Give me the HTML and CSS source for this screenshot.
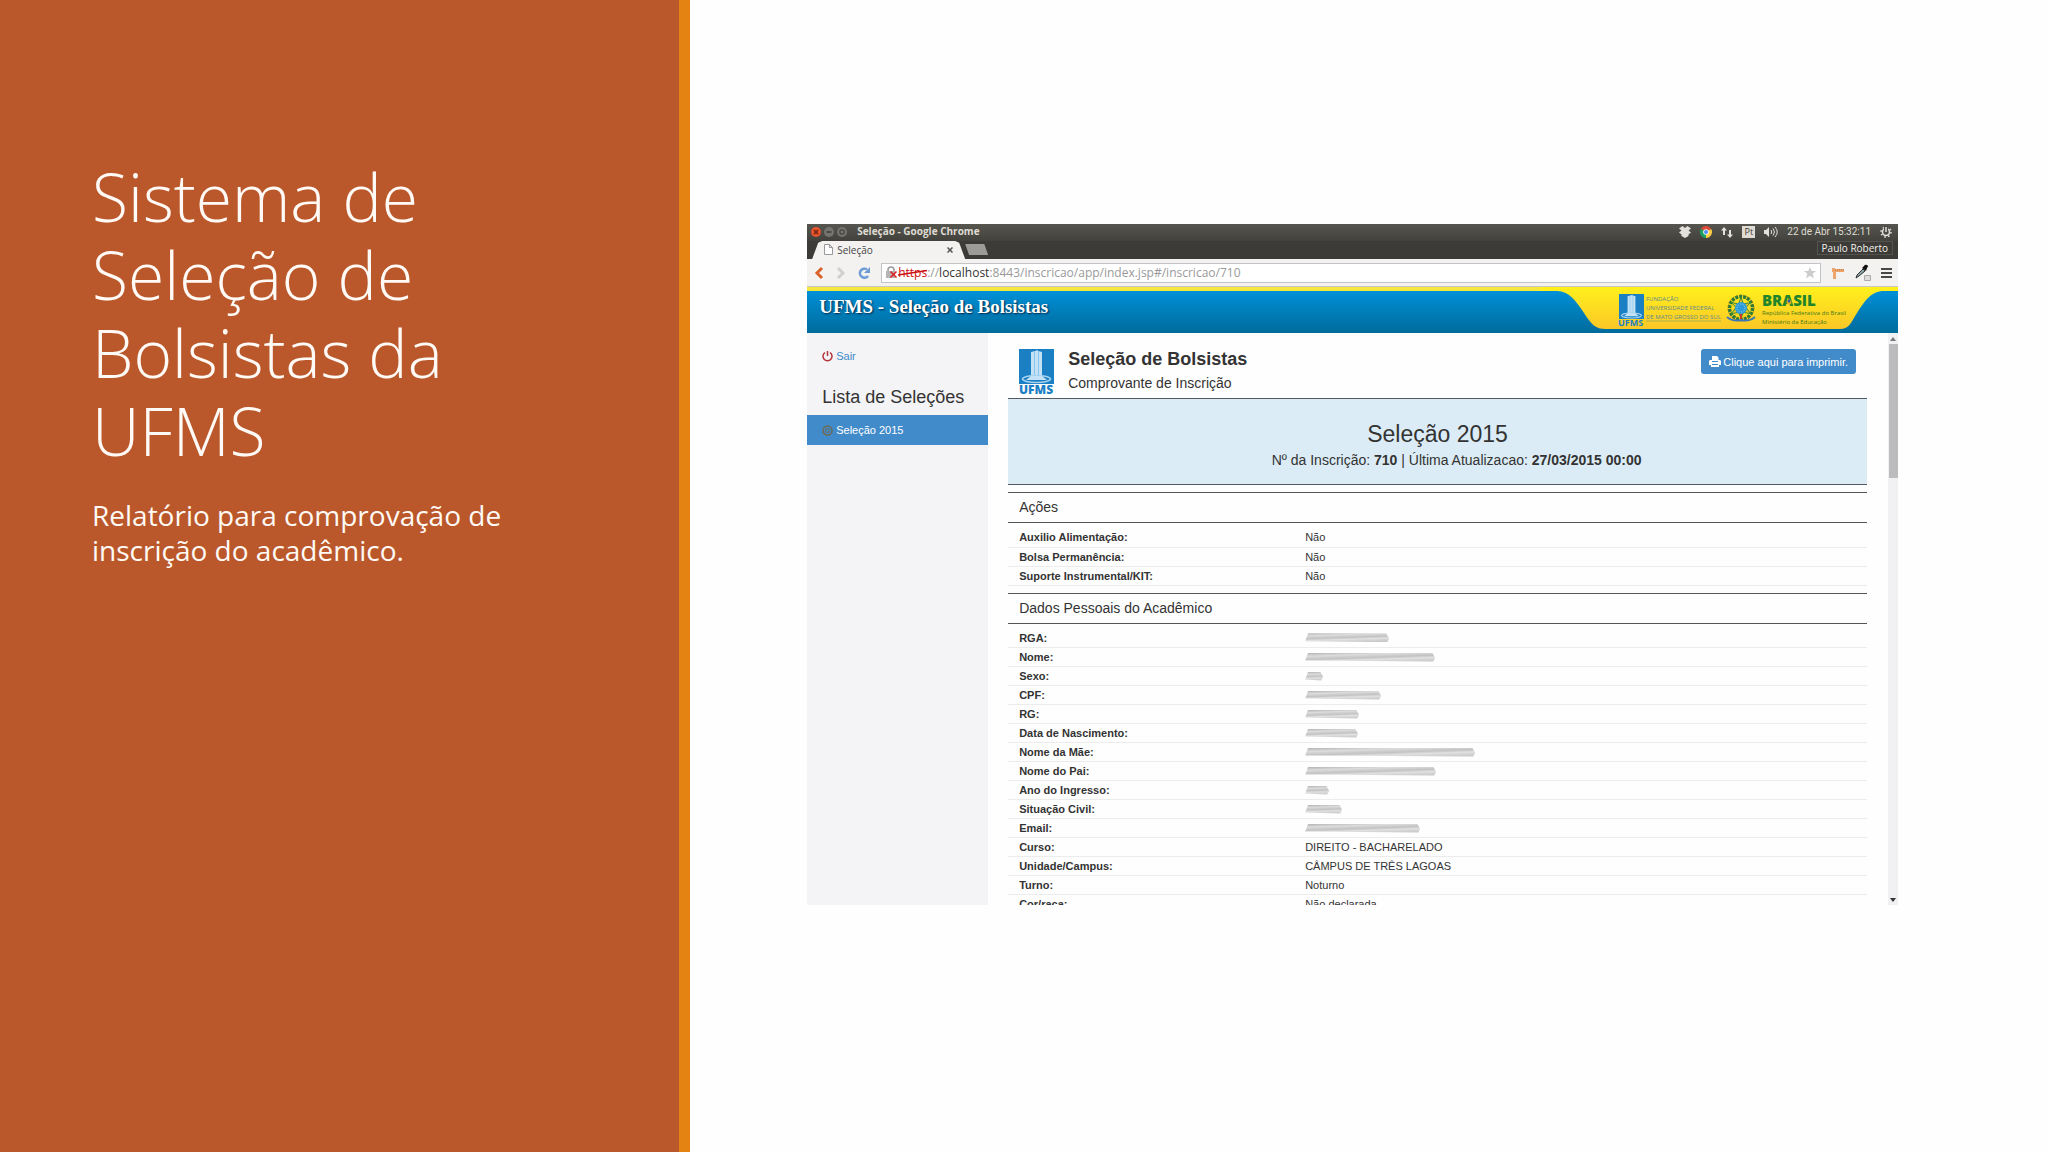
FILE: index.html
```html
<!DOCTYPE html>
<html lang="pt-BR">
<head>
<meta charset="utf-8">
<title>Sistema de Seleção de Bolsistas da UFMS</title>
<link rel="stylesheet" href="styles.css">
</head>
<body>
<svg class="defs" aria-hidden="true">
  <symbol id="ufms-tower" viewBox="0 0 35 35">
    <path fill="#1b7fc4" d="M0 0h35v35H0z"/>
    <path fill="#c4e2f6" d="M12 3l4-1v27h-4zM16 2l3-1v28h-3zM19 2l4 1v25h-4z"/>
    <path fill="#8cc5ea" d="M15 2h1v27h-1zM19 2h1v27h-1z"/>
    <ellipse cx="17.500" cy="30" rx="14" ry="3.500" fill="none" stroke="#a5d3f0" stroke-width="1.500"/>
    <path fill="#c4e2f6" d="M12 27h11l5 4H7z"/>
  </symbol>
</svg>
<main class="slide">
  <section class="intro">
    <h1>Sistema de Seleção de Bolsistas da UFMS</h1>
    <p>Relatório para comprovação de inscrição do acadêmico.</p>
  </section>
  <section class="stage">
    <div class="window">
      <header class="titlebar">
        <div class="controls">
          <svg width="38" height="12" viewBox="0 0 38 12">
            <circle cx="6" cy="6" r="5" fill="#e8532b"/><path d="M4 4l4 4M8 4l-4 4" stroke="#6b2410" stroke-width="1.500"/>
            <circle cx="19" cy="6" r="5" fill="#76746e"/><path d="M16.500 6h5" stroke="#3c3b37" stroke-width="1.500"/>
            <circle cx="32" cy="6" r="5" fill="#76746e"/><path d="M30 4h4v4h-4z" fill="none" stroke="#3c3b37"/>
          </svg>
          <span>Seleção - Google Chrome</span>
        </div>
        <div class="tray">
          <svg width="12" height="12" viewBox="0 0 12 12" fill="#e4e1db"><path d="M3.500 0L6 2l2.500-2L12 2.500 9.500 4.500 12 6.500 9.500 8.500v1.500L6 12 2.500 10V8.500L0 6.500 2.500 4.500 0 2.500z"/></svg>
          <svg width="12" height="12" viewBox="0 0 12 12"><path fill="#dd4b39" d="M6 6L.8 3A6 6 0 0 1 11.200 3z"/><path fill="#ffcd42" d="M6 6l5.200-3A6 6 0 0 1 6 12z"/><path fill="#1aa15f" d="M6 6v6A6 6 0 0 1 .8 3z"/><circle cx="6" cy="6" r="2.800" fill="#fff"/><circle cx="6" cy="6" r="2" fill="#4a8af4"/></svg>
          <svg width="12" height="12" viewBox="0 0 12 12" fill="#e4e1db"><path d="M3 1l3 3.500H4V9H2V4.500H0zM9 12l3-3.500h-2V4H8v4.500H6z"/></svg>
          <span class="lang">Pt</span>
          <svg width="14" height="12" viewBox="0 0 14 12"><path fill="#e4e1db" d="M0 4h2l3-3v10L2 8H0z"/><path fill="none" stroke="#e4e1db" d="M7 4q1.500 2 0 4M9 2.500q3 3.500 0 7M11 1q4.500 5 0 10"/></svg>
          <time>22 de Abr 15:32:11</time>
          <svg width="12" height="12" viewBox="0 0 12 12" fill="none" stroke="#e4e1db"><circle cx="6" cy="6" r="3.500" stroke-width="1.500"/><circle cx="6" cy="6" r="5" stroke-width="1.500" stroke-dasharray="1.600 2.300"/><path d="M6 0v5" stroke="#4a4944" stroke-width="4"/><path d="M6 1v5" stroke-width="1.500"/></svg>
        </div>
      </header>
      <div class="tabs">
        <div class="tab">
          <svg width="9" height="11" viewBox="0 0 9 11"><path fill="#fff" stroke="#999" d="M.5.5h5l3 3v7h-8zM5.500.5v3h3"/></svg>
          <span>Seleção</span>
          <button class="close" aria-label="Fechar aba"><svg width="6" height="6" viewBox="0 0 6 6"><path d="M.5.5l5 5M5.500.5l-5 5" stroke="#555" stroke-width="1.500"/></svg></button>
        </div>
        <button class="newtab" aria-label="Nova aba"></button>
        <button class="user">Paulo Roberto</button>
      </div>
      <div class="toolbar">
        <button aria-label="Voltar"><svg width="12" height="14" viewBox="0 0 12 14"><path d="M9 2L4 7l5 5" fill="none" stroke="#d9632a" stroke-width="3"/></svg></button>
        <button aria-label="Avançar"><svg width="12" height="14" viewBox="0 0 12 14"><path d="M3 2l5 5-5 5" fill="none" stroke="#d2d0cd" stroke-width="3"/></svg></button>
        <button aria-label="Recarregar"><svg width="14" height="14" viewBox="0 0 14 14"><path d="M11 10a4.500 4.500 0 1 1-1-6.500" fill="none" stroke="#6c9bd6" stroke-width="2.600"/><path d="M13 1v6H7z" fill="#6c9bd6"/></svg></button>
        <label class="omnibox">
          <svg width="13" height="13" viewBox="0 0 13 13"><path d="M3 6V4a3 3 0 0 1 6 0v2" fill="none" stroke="#999" stroke-width="1.500"/><path d="M1 5h9v7H1z" fill="#b5b5b5"/><path d="M5.500 5.500l6 6M11.500 5.500l-6 6" stroke="#d22" stroke-width="1.600"/></svg>
          <span class="url"><span class="scheme">https<svg viewBox="0 0 28 8" preserveAspectRatio="none"><path d="M0 6L28 1.500" stroke="#c11" stroke-width="1.600"/></svg></span>://<b>localhost</b></span>
          <input type="text" aria-label="Endereço" value=":8443/inscricao/app/index.jsp#/inscricao/710">
          <svg width="12" height="12" viewBox="0 0 12 12"><path fill="#ccc" d="M6 0l1.700 4H12L8.600 6.800 10 11.500 6 8.800 2 11.500l1.400-4.700L0 4h4.300z"/></svg>
        </label>
        <button aria-label="Régua"><svg width="14" height="14" viewBox="0 0 14 14"><path fill="#eda56c" d="M1 2h3v1h9v3H5v7H2V6H1z"/><path stroke="#b9703a" d="M4 4h9" stroke-dasharray="1 1"/></svg></button>
        <button aria-label="Conta-gotas"><svg width="16" height="18" viewBox="0 0 16 18"><path d="M1 14l1-3 6-6 2 2-6 5z" fill="#8ba7a8" stroke="#333"/><path d="M7 4l4 3 1-3q2-2 0-3t-3 1z" fill="#111"/><path d="M9.500 11.500h6v5h-6z" fill="#ddd" stroke="#aaa"/></svg></button>
        <button aria-label="Menu"><svg width="11" height="12" viewBox="0 0 11 12"><path d="M0 2h11M0 6h11M0 10h11" stroke="#484848" stroke-width="2"/></svg></button>
      </div>
      <div class="banner">
        <h2>UFMS - Seleção de Bolsistas</h2>
        <svg class="brand" width="358" height="46" viewBox="0 0 358 46">
          <defs><linearGradient id="gold" x1="0" y1="0" x2="0" y2="1"><stop offset="0" stop-color="#fff01c"/><stop offset="1" stop-color="#fbc727"/></linearGradient></defs>
          <path fill="url(#gold)" d="M0 0h358v4h-14c-13 0-19 10-27 22-7 11-8 16-17 16H66c-11 0-14-4-22-16C36 14 29 4 17 4H0z"/>
          <use href="#ufms-tower" x="79" y="7" width="25" height="25"/>
          <text x="78" y="39" class="b-ufms">UFMS</text>
          <g class="b-name">
            <text x="106" y="14">FUNDAÇÃO</text>
            <text x="106" y="23">UNIVERSIDADE FEDERAL</text>
            <text x="106" y="32">DE MATO GROSSO DO SUL</text>
          </g>
          <path d="M106 34h75" stroke="#8ba06a" stroke-width=".7"/>
          <g transform="translate(201 21)">
            <circle r="11.500" fill="none" stroke="#2d7a35" stroke-width="3.500" stroke-dasharray="3 1"/>
            <circle r="13" fill="none" stroke="#b5761f" stroke-width="1" stroke-dasharray="1 2.500"/>
            <path fill="#e9c51d" stroke="#3f8a3a" stroke-width="1" d="M0-10.500l2.500 6.500 7-1.500-4.500 5 4.500 6-7-1L0 10l-2.500-5.500-7 1 4.500-6-4.500-5 7 1.500z"/>
            <circle r="6" fill="#2d9bd8"/>
            <circle r="4" fill="none" stroke="#a5d9f2" stroke-dasharray="1 1.500"/>
            <path fill="#c63a2a" d="M-1 6h2v7h-2z"/>
            <path d="M-14 9q6 5 14 3 8 2 14-3" fill="none" stroke="#3c78b5" stroke-width="2"/>
          </g>
          <text x="222" y="19" class="b-brasil">BRASIL</text>
          <circle cx="249" cy="15" r="2.500" fill="#e0b020"/><circle cx="249" cy="14" r="1.500" fill="#3558a8"/>
          <g class="b-gov">
            <text x="222" y="28">República Federativa do Brasil</text>
            <text x="222" y="37">Ministério da Educação</text>
          </g>
        </svg>
      </div>
      <div class="page">
        <nav class="side">
          <a class="exit" href="#sair"><svg width="11" height="11" viewBox="0 0 11 11"><path d="M3 1.500a4.500 4.500 0 1 0 5 0M5.500 0v5" fill="none" stroke="#b5343c" stroke-width="1.500"/></svg>Sair</a>
          <h3>Lista de Seleções</h3>
          <a class="item" href="#selecao-2015"><svg width="11" height="11" viewBox="0 0 11 11"><circle cx="5.500" cy="5.500" r="4.500" fill="none" stroke="#6b6a55" stroke-width="1.500"/><circle cx="5.500" cy="5.500" r="2" fill="none" stroke="#6b6a55"/></svg>Seleção 2015</a>
        </nav>
        <div class="content">
          <div class="head">
            <svg class="logo" width="35" height="46" viewBox="0 0 35 46"><use href="#ufms-tower" width="35" height="35"/><text x="0" y="45" class="l-ufms">UFMS</text></svg>
            <div><h3>Seleção de Bolsistas</h3><p>Comprovante de Inscrição</p></div>
            <button class="print"><svg width="12" height="11" viewBox="0 0 12 11"><path fill="#fff" d="M3 0h5l1.500 1.500V4H11l1 1v4h-2v2H2V9H0V5l1-1h2z"/><path stroke="#428bca" d="M3 5.500h6M3 8.500h6"/></svg>Clique aqui para imprimir.</button>
          </div>
          <div class="band"><h4>Seleção 2015</h4><p>Nº da Inscrição: <b>710</b> | Última Atualizacao: <b>27/03/2015 00:00</b></p></div>
          <h5>Ações</h5>
          <table>
            <tr><th scope="row">Auxilio Alimentação:</th><td>Não</td></tr>
            <tr><th scope="row">Bolsa Permanência:</th><td>Não</td></tr>
            <tr><th scope="row">Suporte Instrumental/KIT:</th><td>Não</td></tr>
          </table>
          <h5>Dados Pessoais do Acadêmico</h5>
          <table>
            <tr><th scope="row">RGA:</th><td><span class="smudge" style="width:84px"></span></td></tr>
            <tr><th scope="row">Nome:</th><td><span class="smudge" style="width:130px"></span></td></tr>
            <tr><th scope="row">Sexo:</th><td><span class="smudge" style="width:18px"></span></td></tr>
            <tr><th scope="row">CPF:</th><td><span class="smudge" style="width:76px"></span></td></tr>
            <tr><th scope="row">RG:</th><td><span class="smudge" style="width:54px"></span></td></tr>
            <tr><th scope="row">Data de Nascimento:</th><td><span class="smudge" style="width:53px"></span></td></tr>
            <tr><th scope="row">Nome da Mãe:</th><td><span class="smudge" style="width:170px"></span></td></tr>
            <tr><th scope="row">Nome do Pai:</th><td><span class="smudge" style="width:131px"></span></td></tr>
            <tr><th scope="row">Ano do Ingresso:</th><td><span class="smudge" style="width:24px"></span></td></tr>
            <tr><th scope="row">Situação Civil:</th><td><span class="smudge" style="width:37px"></span></td></tr>
            <tr><th scope="row">Email:</th><td><span class="smudge" style="width:115px"></span></td></tr>
            <tr><th scope="row">Curso:</th><td>DIREITO - BACHARELADO</td></tr>
            <tr><th scope="row">Unidade/Campus:</th><td>CÂMPUS DE TRÊS LAGOAS</td></tr>
            <tr><th scope="row">Turno:</th><td>Noturno</td></tr>
            <tr><th scope="row">Cor/raça:</th><td>Não declarada</td></tr>
          </table>
        </div>
        <div class="scroll"><i class="up"></i><i class="thumb"></i><i class="down"></i></div>
      </div>
    </div>
  </section>
</main>
</body>
</html>
```
FILE: styles.css
```css
* { box-sizing: border-box; margin: 0; }
body { background: #fdfefd; font-family: "Liberation Sans", Arial, sans-serif; color: #333; }
button { border: 0; padding: 0; background: none; font: inherit; color: inherit; display: flex; align-items: center; }
a { text-decoration: none; }
svg { display: block; flex: none; }
.defs { width: 0; height: 0; position: absolute; }

.slide { display: flex; min-height: 100vh; }
.intro { flex: none; width: 33.700%; padding: 157px 150px 0 92px; background: #ba582b; border-right: 11px solid #e48312; color: #fffaf5; font-family: "Open Sans", sans-serif; }
.intro h1 { font-size: 66px; line-height: 78px; font-weight: 300; }
.intro p { font-size: 28px; line-height: 35px; margin-top: 29px; }
.stage { flex: 1; min-width: 0; padding: 224px 150px 0 117px; }

.window { display: flex; flex-direction: column; aspect-ratio: 1091 / 681; overflow: hidden; }
.titlebar { flex: none; display: flex; justify-content: space-between; height: 17px; padding: 0 6px 2px 3px; background: linear-gradient(#56564f, #42413c); color: #dfdbd2; font-family: "Open Sans", sans-serif; font-size: 10px; line-height: 15px; }
.controls, .tray { display: flex; align-items: center; gap: 9px; }
.controls { font-weight: 700; }
.tray time { font-family: Roboto, sans-serif; }
.lang { width: 13px; line-height: 12px; background: #dfdbd2; color: #3c3b37; font-size: 9px; text-align: center; }
.tabs { flex: none; display: flex; height: 18px; padding: 0 5px; background: #3c3b37; font-family: "Open Sans", sans-serif; font-size: 10px; line-height: 16px; }
.tab { display: flex; align-items: center; gap: 4px; width: 153px; padding: 0 12px 1px; background: #f3f2f1; color: #444; clip-path: polygon(0 100%, 6px 10%, 10px 0, 143px 0, 147px 10%, 100% 100%); }
.close { margin-left: auto; }
.newtab { width: 23px; height: 11px; margin-top: 3px; background: #9d9b97; clip-path: polygon(0 0, 83% 0, 100% 100%, 17% 100%); }
.user { margin-left: auto; height: 14px; padding: 0 4px; border: 1px solid #55534d; color: #f0eeea; }
.toolbar { flex: none; display: flex; align-items: center; gap: 10px; height: 28px; padding: 0 6px; background: #f3f2f1; border-bottom: 1px solid #c8c8c0; }
.omnibox { flex: 1; display: flex; align-items: center; height: 20px; padding: 0 4px 0 3px; border: 1px solid #c4c4c4; background: #fff; font: 12px/16px "Open Sans", sans-serif; color: #999; }
.scheme { position: relative; color: #c11; }
.scheme svg { position: absolute; left: 0; top: 5px; width: 100%; height: 8px; }
.url b { font-weight: 400; color: #333; }
.omnibox input { flex: 1; min-width: 0; border: 0; padding: 0; outline: 0; font: inherit; color: inherit; background: none; }

.banner { flex: none; display: flex; justify-content: space-between; height: 46px; background: linear-gradient(#f4e63c 0 4px, #0090d8 4px, #006b9b); }
.banner h2 { padding: 8px 0 0 12px; font: 700 19px/24px "Liberation Serif", serif; color: #fff; text-shadow: 1px 1px 2px #024; }
.b-ufms { font: 700 9px "Open Sans", sans-serif; fill: #1b7fc4; }
.b-name { font: 6px "Open Sans", sans-serif; fill: #5b8a90; }
.b-brasil { font: 800 15px "Open Sans", sans-serif; fill: #23852a; }
.b-gov { font: 500 6px "Open Sans", sans-serif; fill: #43791c; }
.l-ufms { font: 800 12px "Open Sans", sans-serif; fill: #1b7fc4; }

.page { flex: 1; min-height: 0; display: flex; background: #fefefe; overflow: hidden; }
.side { flex: none; width: 181px; background: #f4f3f5; font-size: 11px; }
.side a { display: flex; align-items: center; gap: 3px; padding-left: 15px; color: #428bca; }
.side .exit { height: 30px; margin-top: 8px; }
.side h3 { padding: 14px 15px 0; font-size: 18px; line-height: 24px; font-weight: 400; }
.side .item { height: 30px; margin-top: 6px; background: #428bca; color: #fff; }
.content { flex: 1; min-width: 0; padding-left: 20px; }
.head { display: flex; align-items: flex-start; height: 65px; padding: 16px 11px 0; }
.head h3 { font-size: 18px; line-height: 20px; }
.head p { font-size: 14px; line-height: 20px; margin-top: 4px; }
.head div { margin-left: 14px; }
.print { gap: 2px; margin-left: auto; height: 25px; padding: 0 8px; border-radius: 3px; background: #428bca; color: #fff; font-size: 11px; }
.band { padding-top: 20px; height: 87px; border: solid #555a62; border-width: 1px 0; background: #dbecf6; text-align: center; }
.band h4 { font-size: 23px; line-height: 30px; font-weight: 400; }
.band p { padding-left: 38px; font-size: 14px; line-height: 22px; }
h5 { height: 31px; margin: 7px 0 5px; padding-left: 11px; border: solid #555; border-width: 1px 0; font-size: 14px; line-height: 28px; font-weight: 400; }
table { width: 100%; border-collapse: collapse; table-layout: fixed; font-size: 11px; line-height: 18px; }
th, td { height: 19px; padding: 0; border-bottom: 1px solid #ececec; text-align: left; }
th { width: 297px; padding-left: 11px; }
.smudge { display: block; height: 9px; background: linear-gradient(178deg, #aaa, #d8d8d8 25%, #bcbcbc 50%, #ddd 65%, #bbb); clip-path: polygon(3px 0, calc(100% - 3px) 0, 100% 60%, calc(100% - 2px) 100%, 0 90%); opacity: .9; }
.scroll { flex: none; display: flex; flex-direction: column; align-items: center; width: 10px; margin-left: 21px; background: #f1f0f2; }
.up, .down { border: solid transparent; border-width: 0 3px 4px; border-bottom-color: #777; margin: 4px 0 3px; }
.down { margin-top: auto; border-width: 4px 3px 0; border-top-color: #333; }
.thumb { width: 9px; height: 134px; background: #bcbbbd; }
```
